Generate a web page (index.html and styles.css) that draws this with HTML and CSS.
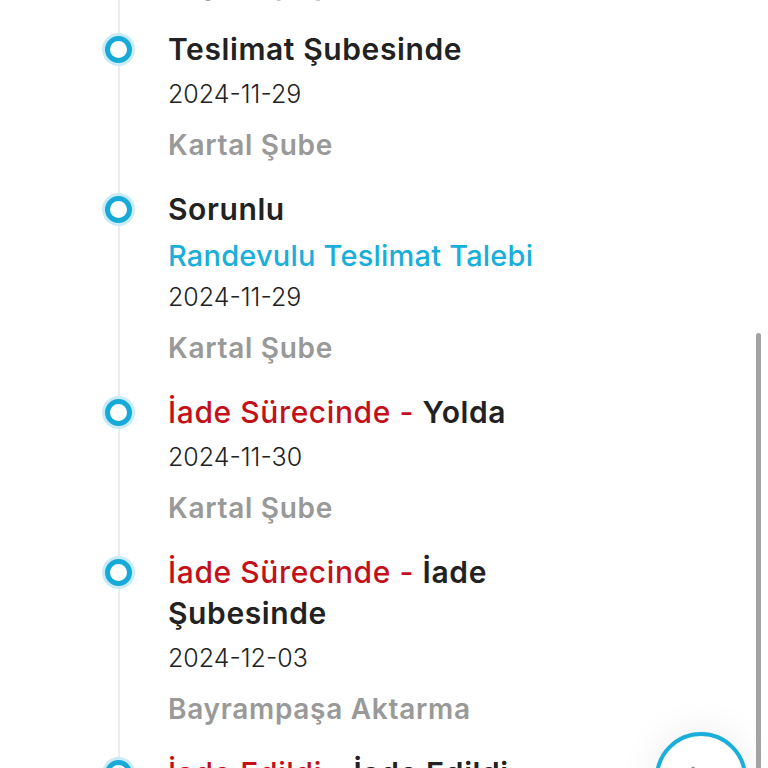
FILE: index.html
```html
<!DOCTYPE html>
<html lang="tr">
<head>
<meta charset="utf-8">
<title>Kargo Takip</title>
<link rel="stylesheet" href="styles.css">
</head>
<body>
<div class="page">
  <div class="timeline">
    <div class="item">
      <span class="dot"></span>
      <div class="title">Aktarmada</div>
      <div class="date">2024-12-02</div>
      <div class="loc">Bayrampaşa Aktarma</div>
    </div>
    <div class="item">
      <span class="dot"></span>
      <div class="title">Teslimat Şubesinde</div>
      <div class="date">2024-11-29</div>
      <div class="loc">Kartal Şube</div>
    </div>
    <div class="item">
      <span class="dot"></span>
      <div class="title">Sorunlu</div>
      <div class="sub">Randevulu Teslimat Talebi</div>
      <div class="date">2024-11-29</div>
      <div class="loc">Kartal Şube</div>
    </div>
    <div class="item">
      <span class="dot"></span>
      <div class="title"><span class="red">İade Sürecinde - </span>Yolda</div>
      <div class="date">2024-11-30</div>
      <div class="loc">Kartal Şube</div>
    </div>
    <div class="item">
      <span class="dot"></span>
      <div class="title"><span class="red">İade Sürecinde - </span>İade Şubesinde</div>
      <div class="date">2024-12-03</div>
      <div class="loc">Bayrampaşa Aktarma</div>
    </div>
    <div class="item">
      <span class="dot"></span>
      <div class="title"><span class="red">İade Edildi - </span>İade Edildi</div>
      <div class="date">2024-12-04</div>
      <div class="loc">Bayrampaşa Aktarma</div>
    </div>
  </div>
  <button class="fab" aria-label="İleri">
    <svg width="30" height="30" viewBox="0 0 30 30"><path d="M3 3 L15 15 L3 27" fill="none" stroke="#8a8a8a" stroke-width="3" stroke-linecap="round" stroke-linejoin="round"/></svg>
  </button>
  <div class="scrollbar"></div>
</div>
</body>
</html>
```
FILE: styles.css
```css
* { box-sizing: border-box; }
html, body { margin: 0; padding: 0; background: #fff; }
body { font-family: "Inter", "Noto Sans", sans-serif; color: #222; }
.page { position: relative; width: 768px; height: 768px; overflow: hidden; }
.timeline { position: relative; margin-top: -131px; padding-left: 168px; }
.timeline::before { content: ""; position: absolute; left: 118px; top: 0; bottom: 0; width: 2px; background: #ececec; }
.item { position: relative; padding-bottom: 23px; }
.dot { position: absolute; left: -66px; top: 4px; width: 33px; height: 33px; border-radius: 50%; background: #c9ebf7; display: flex; align-items: center; justify-content: center; }
.dot::after { content: ""; width: 17px; height: 17px; border-radius: 50%; border: 5px solid #17a9d8; background: #fff; }
.title { font-size: 30px; line-height: 41px; font-weight: 600; color: #222; letter-spacing: 0.6px; max-width: 420px; }
.red { color: #c3111b; font-weight: 500; }
.sub { margin-top: 5px; margin-bottom: -3px; font-size: 29px; line-height: 41px; font-weight: 500; color: #1aaedb; letter-spacing: 0.2px; }
.date { margin-top: 4px; font-size: 25px; line-height: 41px; font-weight: 300; color: #222; }
.loc { margin-top: 10px; font-size: 28px; line-height: 41px; font-weight: 600; color: #999; letter-spacing: 0.7px; }
.fab { position: absolute; left: 655px; top: 732px; width: 92px; height: 92px; border-radius: 50%; border: 4px solid #1aaedb; background: #fff; box-shadow: 0 0 40px rgba(0,0,0,0.08); padding: 29px 0 0 31px; display: flex; align-items: flex-start; justify-content: flex-start; }
.fab svg { display: block; }
.scrollbar { position: absolute; left: 756px; top: 333px; width: 5px; height: 460px; border-radius: 3px; background: #a3a3a3; }
```
